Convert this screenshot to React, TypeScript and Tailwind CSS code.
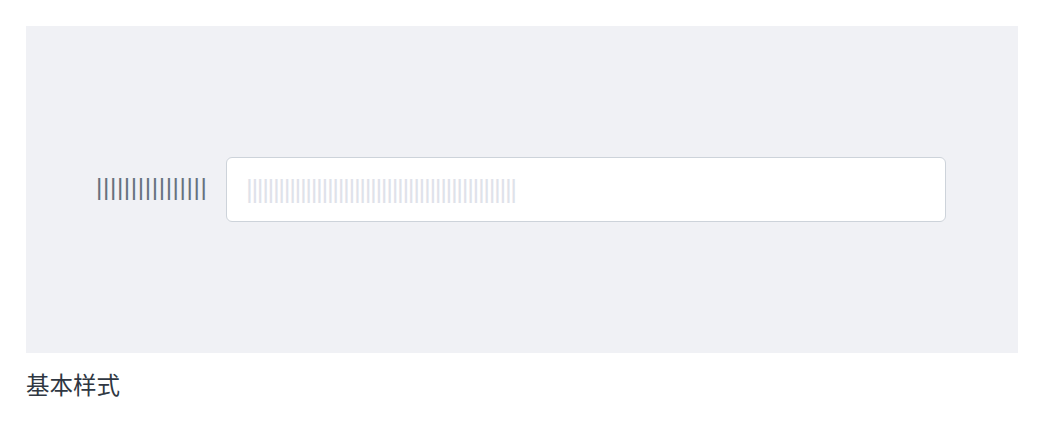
import React from "react";

export default function App() {
  const labelBars = "||||||||||||||||";
  const placeholderBars = "||||||||||||||||||||||||||||||||||||||||||||||||||";
  return (
    <div className="w-[1046px] h-[422px] bg-white p-[26px] font-['Liberation_Sans','Noto_Sans_CJK_SC',sans-serif]">
      <div className="w-[992px] h-[327px] bg-[#f0f1f5] px-[72px] flex items-center">
        <div className="flex w-full items-center">
          <label className="w-[130px] -ml-[2px] shrink-0 pb-[6px] text-[24.5px] leading-[36px] tracking-[0.6px] text-[#65717e] whitespace-nowrap">
            {labelBars}
          </label>
          <input
            type="text"
            placeholder={placeholderBars}
            className="flex-1 h-[65px] rounded-[6px] border border-[#cdd3da] bg-white pl-[19px] pr-3 text-[26px] tracking-[-1.36px] text-[#333] placeholder:text-[#dfe2ea] outline-none"
          />
        </div>
      </div>
      <div className="mt-[13px] text-[23.5px] leading-[36px] text-[#2f3742] font-['Noto_Sans_CJK_SC',sans-serif]">
        基本样式
      </div>
    </div>
  );
}
